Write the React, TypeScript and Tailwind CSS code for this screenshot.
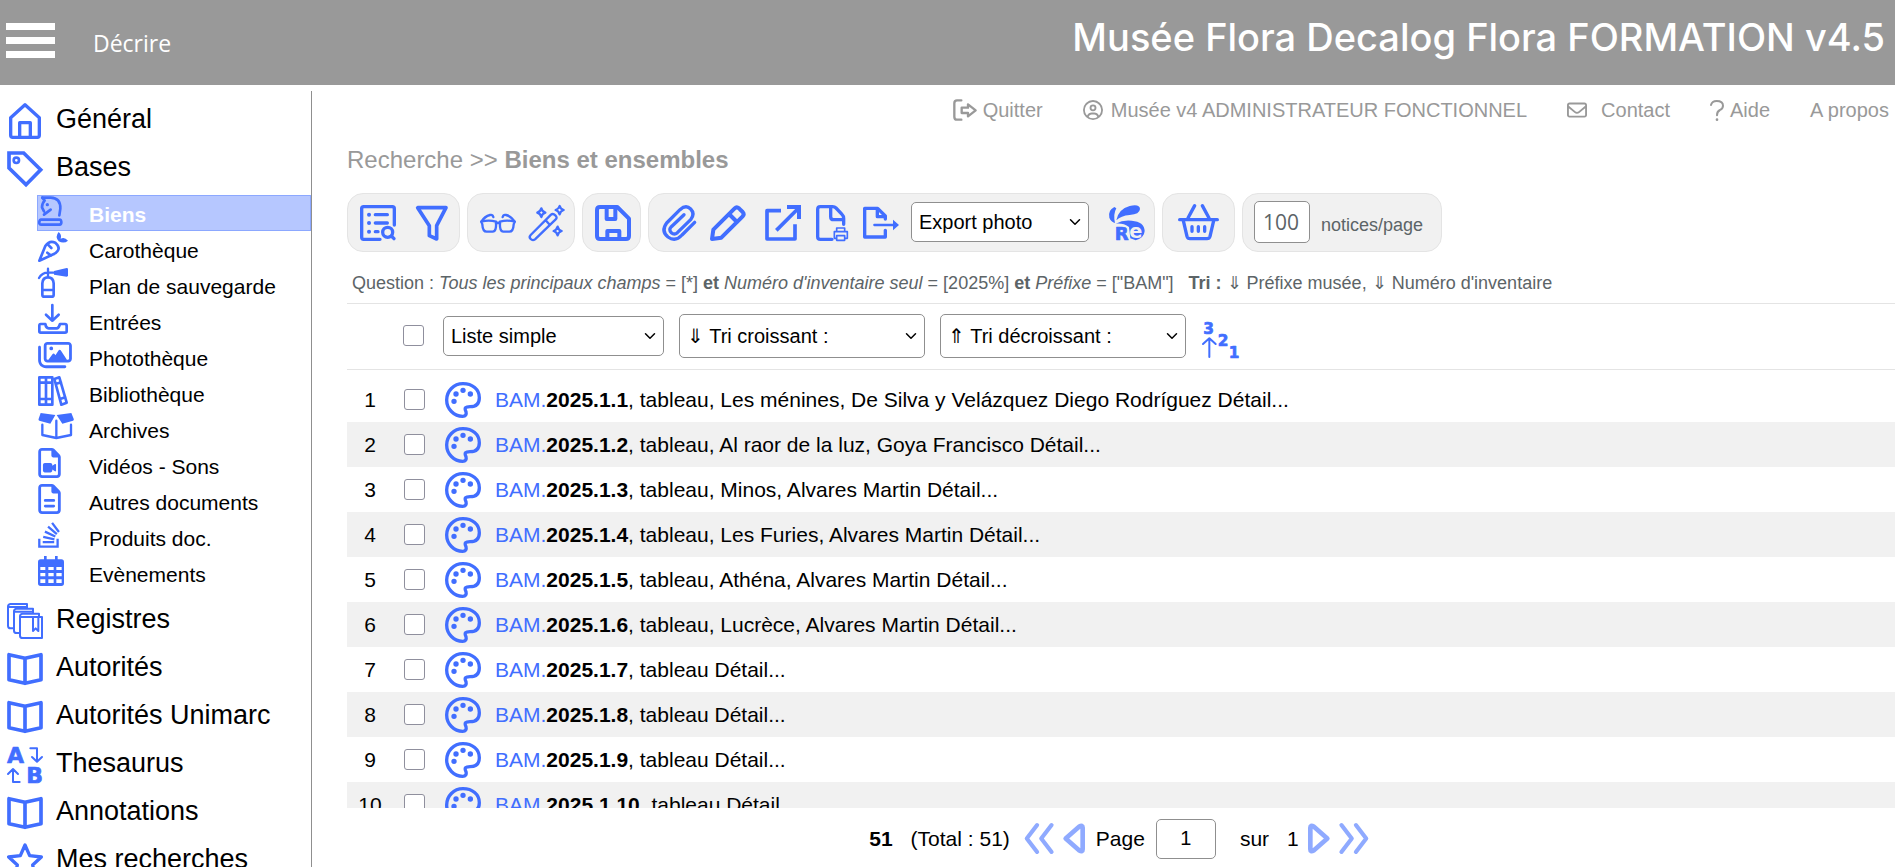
import { useState } from 'react'
import type { ReactNode } from 'react'
import clsx from 'clsx'
import { ChevronDown } from 'lucide-react'
import { FaRegCircleUser, FaRegEnvelope, FaRegFileLines, FaRegFileVideo, FaRegImages, FaStackOverflow } from 'react-icons/fa6'

type DrawProps = { box: string; className: string; width?: number; children: ReactNode }

// Outline icon, three drawing units to a pixel
function Draw({ box, className, width = 10, children }: DrawProps) {
    return (
        <svg
            viewBox={box}
            className={clsx('shrink-0 overflow-visible', className)}
            fill="none"
            stroke="currentColor"
            strokeWidth={width}
            strokeLinecap="round"
            strokeLinejoin="round"
            aria-hidden="true"
        >
            {children}
        </svg>
    )
}

const solid = { fill: 'currentColor', stroke: 'none' }
const glyph = { fill: 'currentColor', strokeWidth: 2, fontFamily: 'DejaVu Sans, sans-serif', fontWeight: 700 }

/* ---------- Menu icons ---------- */

const HomeIcon = () => (
    <Draw box="0 0 108 108" className="size-9">
        <path d="M54 5L97 44V97q0 6-6 6H17q-6 0-6-6V44Z" />
        <path d="M38 103V59H70V103" />
    </Draw>
)

const TagIcon = () => (
    <Draw box="0 0 108 108" className="size-9" width={11}>
        <path d="M6 6H50L101 56L57 101L6 51Z" strokeLinejoin="miter" />
        <circle cx="28" cy="28" r="8" strokeWidth="8" />
    </Draw>
)

const RegisterIcon = () => (
    <Draw box="0 0 108 108" className="size-9" width={6}>
        <path d="M60 12V3H10Q3 4 3 11V68Q3 76 11 76H20M5 12H60V16" />
        <path d="M78 26V17H28Q21 18 21 25V83Q21 90 29 90H37M23 26H78V30" />
        <path d="M96 40V32H46Q39 33 39 40V98Q39 105 47 105H105V42H41" />
        <path d="M78 44V84l8-8 8 8V44" />
    </Draw>
)

const BookIcon = () => (
    <Draw box="0 0 108 108" className="size-9" width={11}>
        <path d="M54 22L6 11V86L54 97L102 86V11L54 22V97" />
    </Draw>
)

const ThesaurusIcon = () => (
    <Draw box="0 0 108 108" className="size-9" width={6}>
        <text x="0" y="49" fontSize="66" {...glyph}>A</text>
        <text x="58" y="108" fontSize="66" {...glyph}>B</text>
        <path d="M70 4H90V43M75 30L90 44L105 30" />
        <path d="M38 105H18V66M3 81L18 66L33 81" />
    </Draw>
)

const StarIcon = () => (
    <Draw box="0 0 108 108" className="size-9">
        <path d="M54 6L68 38L103 42L77 66L84 101L54 83L24 101L31 66L5 42L40 38Z" />
    </Draw>
)

const KnightIcon = () => (
    <Draw box="0 0 90 90" className="size-[30px]" width={8}>
        <path d="M10 71H65Q69 71 70 78T64 86H10Q3 86 4 78T10 71Z" />
        <path d="M13 5H38Q68 6 67 38L64 58" />
        <path d="M13 5L20 14Q12 22 12 34L18 46M18 56L38 41" />
        <circle cx="28" cy="26" r="5" {...solid} />
    </Draw>
)

const CarrotIcon = () => (
    <Draw box="0 0 90 90" className="size-[30px]" width={8}>
        <path d="M4 86L22 42Q34 24 52 32Q68 46 58 58Q54 64 46 67Z" />
        <path d="M30 38L40 48M28 62L38 70" />
        <path d="M62 28Q50 14 62 0Q72 8 68 20Q80 14 90 26Q78 36 62 28Z" {...solid} />
    </Draw>
)

const ExtinguisherIcon = () => (
    <Draw box="0 0 90 90" className="size-[30px]" width={7}>
        <path d="M48 9L86 0Q90 0 90 4V22Q90 26 86 26L48 20Z" {...solid} />
        <path d="M3 30Q12 14 30 14H50M30 2V26" />
        <path d="M13 80V46Q14 28 30 28T47 46V80Q47 86 41 86H19Q13 86 13 80ZM13 66H47" strokeWidth="8" />
    </Draw>
)

const InboxIcon = () => (
    <Draw box="0 0 90 90" className="size-[30px]" width={8}>
        <path d="M43 3V50M24 32L43 50L62 32" />
        <path d="M8 60H22Q24 73 32 73H56Q62 73 66 60H81Q86 60 86 65V82Q86 86 81 86H8Q4 86 4 82V65Q4 60 8 60Z" />
    </Draw>
)

const ShelfIcon = () => (
    <Draw box="0 0 90 90" className="size-[30px]" width={8}>
        <path d="M4 4H24V86H4ZM24 4H43V86H24ZM4 20H43M4 69H43" />
        <path d="M49 9L64 4L86 80L70 86ZM53 24L69 19M66 69L82 64" />
    </Draw>
)

const BoxIcon = () => (
    <Draw box="0 0 108 90" className="h-[30px] w-9" width={7}>
        <path d="M8 3L52 9L37 35L4 26Q0 24 2 20ZM100 3L56 9L73 35L105 26Q109 24 107 20Z" {...solid} />
        <path d="M13 38V69L55 78L99 69V38M55 26V78" />
    </Draw>
)

const CalendarIcon = () => (
    <Draw box="0 0 90 90" className="size-[30px]">
        <path
            fillRule="evenodd"
            d="M18 0H26V10H51V0H59V10H70Q78 10 78 18V82Q78 90 70 90H8Q0 90 0 82V18Q0 10 8 10H18ZM7 33V42H22V33ZM31 33V42H47V33ZM55 33V42H71V33ZM7 51V61H22V51ZM31 51V61H47V51ZM55 51V61H71V51ZM7 70V81H22V70ZM31 70V81H47V70ZM55 70V81H71V70Z"
            {...solid}
        />
    </Draw>
)

/* ---------- Toolbar icons ---------- */

const ListSearchIcon = () => (
    <Draw box="0 0 108 108" className="size-9">
        <path d="M103 60V11Q103 5 97 5H11Q5 5 5 11V97Q5 103 11 103H60" />
        <path d="M46 29H82M46 54H82M46 80H54" />
        <path d="M27 29h.1M27 54h.1M27 80h.1" strokeWidth="12" />
        <circle cx="83" cy="82" r="15" />
        <path d="M94 93L102 101" />
    </Draw>
)

const FunnelIcon = () => (
    <Draw box="0 0 108 108" className="size-9" width={11}>
        <path d="M11 8H96L68 62V102L46 92V62Z" />
    </Draw>
)

const GlassesIcon = () => (
    <Draw box="0 0 108 108" className="size-9" width={7}>
        <path d="M4 50Q26 44 48 50Q50 80 38 80H20Q8 80 7 58ZM104 50Q82 44 60 50Q58 80 70 80H88Q100 80 101 58Z" />
        <path d="M48 56Q54 50 60 56M4 50Q14 34 30 30Q38 28 40 36M104 50Q94 34 78 30Q70 28 68 36" />
    </Draw>
)

const WandIcon = () => (
    <Draw box="0 0 108 108" className="size-9" width={7}>
        <path d="M5 90L66 29Q72 24 79 31T80 43L18 103Q11 108 5 102T5 90ZM50 46L62 59" />
        <path d="M37 10Q39 20 49 23Q39 26 37 36Q34 26 25 23Q34 20 37 10ZM92 3Q94 12 104 15Q94 18 92 28Q89 18 80 15Q89 12 92 3ZM86 65Q88 75 98 78Q88 81 86 91Q83 81 74 78Q83 75 86 65Z" />
    </Draw>
)

const SaveIcon = () => (
    <Draw box="0 0 108 108" className="size-9" width={12}>
        <path d="M15 6H67L102 41V93Q102 102 93 102H15Q6 102 6 93V15Q6 6 15 6Z" />
        <path d="M35 7V42H61V7M37 101V78H73V101" />
    </Draw>
)

const ClipIcon = () => (
    <Draw box="0 0 108 108" className="size-9">
        <path d="M98 52L60 90Q40 112 18 96Q-4 78 14 54L54 14Q72 -2 86 12Q100 26 86 44L46 83Q37 91 28 83T28 65L66 29" />
    </Draw>
)

const PencilIcon = () => (
    <Draw box="0 0 108 108" className="size-9" width={12}>
        <path d="M6 102L10 74L74 10Q80 4 87 10L98 21Q104 28 98 34L34 98ZM57 27L81 51" />
    </Draw>
)

const ExternalIcon = () => (
    <Draw box="0 0 108 108" className="size-9" width={11}>
        <path d="M48 17H6V102H90V58" strokeLinecap="butt" />
        <path d="M34 76L98 12" strokeLinecap="butt" />
        <path d="M66 6H102V42" strokeLinecap="butt" strokeLinejoin="miter" strokeWidth="12" />
    </Draw>
)

const PrintPageIcon = () => (
    <Draw box="-6 0 108 108" className="size-9">
        <path d="M48 103H13Q5 103 5 95V13Q5 5 13 5H50Q56 5 60 9L78 28Q83 33 83 40V58" />
        <path d="M44 6V35Q44 44 53 44H82" />
        <path d="M62 80V69H86V80M62 100H55V80H94V100H86M62 92H86V106H62Z" strokeWidth="5" />
    </Draw>
)

const ExportPageIcon = () => (
    <Draw box="0 0 108 108" className="size-9">
        <path d="M67 42V33L44 10H5V96H67V76M43 12V35H66" />
        <path d="M34 60H96" strokeWidth="7" />
        <path d="M90 44L108 60L90 76Z" {...solid} />
    </Draw>
)

const RabbitIcon = () => (
    <Draw box="0 0 108 108" className="size-9">
        <path d="M16 6Q-4 16 1 38Q5 50 18 54Q12 28 22 10ZM22 46Q28 12 62 3Q92 -4 93 12Q92 28 62 30Q36 32 22 46Z" {...solid} />
        <path d="M20 56Q42 44 68 47Q106 50 107 78Q106 98 80 106L64 100L60 66Q44 54 20 56Z" {...solid} />
        <text x="17" y="104" fontSize="54" {...glyph}>R</text>
        <text x="61" y="98" fontSize="58" {...glyph} fill="#f1f1f1" stroke="none">e</text>
    </Draw>
)

const BasketIcon = () => (
    <Draw box="0 0 123 114" className="h-[38px] w-[41px]">
        <path d="M5 47H118M30 42L50 5M93 42L73 5" />
        <path d="M16 50L27 97Q29 104 36 104H87Q94 104 96 97L107 50M42 68V82M61 68V82M80 68V82" />
    </Draw>
)

const SortIcon = () => (
    <Draw box="0 0 108 108" className="size-9" width={6}>
        <text x="4" y="35" fontSize="46" {...glyph}>3</text>
        <text x="47" y="71" fontSize="46" {...glyph}>2</text>
        <text x="80" y="107" fontSize="46" {...glyph}>1</text>
        <path d="M22 105V50M3 66L22 49L41 66" />
    </Draw>
)

const PaletteIcon = () => (
    <Draw box="0 0 108 108" className="size-9 text-[#416eff]">
        <path d="M54 5C26 5 5 27 5 54s22 49 48 49c9 0 12-6 10-14c-6-12-1-15 12-15c20 0 28-9 28-27C103 22 82 5 54 5Z" />
        <path d="M27 58h.1M33 36h.1M54 25h.1M76 36h.1" strokeWidth="16" />
    </Draw>
)

const LeaveIcon = () => (
    <Draw box="0 0 72 66" className="h-[22px] w-6" width={7}>
        <path d="M25 4H12Q4 4 4 13V53Q4 62 12 62H25" />
        <path d="M26 26H45V16L68 34L45 52V42H26Z" />
    </Draw>
)

const HelpIcon = () => (
    <Draw box="0 0 42 63" className="h-[21px] w-[14px]" width={6}>
        <path d="M3 15Q6 3 20 3Q39 3 39 17Q39 25 30 30Q21 34 21 46" />
        <circle cx="21" cy="59" r="4" {...solid} />
    </Draw>
)

const FirstIcon = ({ className = '' }) => (
    <Draw box="0 0 87 90" className={clsx('h-[31px] w-[30px]', className)} width={12}>
        <path d="M38 6L8 45L38 84M80 6L50 45L80 84" />
    </Draw>
)

const PrevIcon = ({ className = '' }) => (
    <Draw box="0 0 66 90" className={clsx('h-[31px] w-[22px]', className)} width={14}>
        <path d="M8 45L49 9Q59 3 59 13V77Q59 87 49 81Z" />
    </Draw>
)

/* ---------- Data ---------- */

const databases = [
    { label: 'Biens', icon: <KnightIcon /> },
    { label: 'Carothèque', icon: <CarrotIcon /> },
    { label: 'Plan de sauvegarde', icon: <ExtinguisherIcon /> },
    { label: 'Entrées', icon: <InboxIcon /> },
    { label: 'Photothèque', icon: <FaRegImages className="h-[30px] w-[34px]" /> },
    { label: 'Bibliothèque', icon: <ShelfIcon /> },
    { label: 'Archives', icon: <BoxIcon /> },
    { label: 'Vidéos - Sons', icon: <FaRegFileVideo className="h-[30px] w-[23px]" /> },
    { label: 'Autres documents', icon: <FaRegFileLines className="h-[30px] w-[23px]" /> },
    { label: 'Produits doc.', icon: <FaStackOverflow className="h-[30px] w-[22px]" /> },
    { label: 'Evènements', icon: <CalendarIcon /> }
]

const sections = [
    { label: 'Registres', icon: <RegisterIcon /> },
    { label: 'Autorités', icon: <BookIcon /> },
    { label: 'Autorités Unimarc', icon: <BookIcon /> },
    { label: 'Thesaurus', icon: <ThesaurusIcon /> },
    { label: 'Annotations', icon: <BookIcon /> },
    { label: 'Mes recherches', icon: <StarIcon /> }
]

const records = [
    ', tableau, Les ménines, De Silva y Velázquez Diego Rodríguez Détail...',
    ', tableau, Al raor de la luz, Goya Francisco Détail...',
    ', tableau, Minos, Alvares Martin Détail...',
    ', tableau, Les Furies, Alvares Martin Détail...',
    ', tableau, Athéna, Alvares Martin Détail...',
    ', tableau, Lucrèce, Alvares Martin Détail...',
    ', tableau Détail...',
    ', tableau Détail...',
    ', tableau Détail...',
    ', tableau Détail...'
]

/* ---------- Building blocks ---------- */

function Section({ icon, label }: { icon: ReactNode; label: string }) {
    return (
        <a href="#" className="flex h-12 items-center gap-[13px] pl-[7px] text-[27px] whitespace-nowrap">
            <span className="mt-1.5 text-[#416eff]">{icon}</span>
            <span className="pt-0.5">{label}</span>
        </a>
    )
}

function Group({ className, children }: { className: string; children: ReactNode }) {
    return (
        <div className={clsx('flex h-[59px] items-center rounded-2xl border border-[#e4e4e4] bg-[#f1f1f1] text-[#416eff]', className)}>
            {children}
        </div>
    )
}

function Tool({ label, children }: { label: string; children: ReactNode }) {
    return <button type="button" aria-label={label}>{children}</button>
}

function Select({ label, name, className }: { label: string; name: string; className: string }) {
    return (
        <div className={clsx('relative text-black', className)}>
            <select aria-label={name} className="size-full appearance-none rounded-[5px] border border-[#8f8f8f] bg-white px-[7px] text-xl">
                <option>{label}</option>
            </select>
            <ChevronDown className="pointer-events-none absolute top-1/2 right-[5px] size-[18px] -translate-y-1/2" strokeWidth={2} />
        </div>
    )
}

const checkbox = 'block size-[21px] appearance-none rounded-[3px] border border-[#8f8f9d] bg-white checked:bg-[#416eff]'

export default function App() {
    const [perPage, setPerPage] = useState('100')
    const [page, setPage] = useState('1')
    const [menuOpen, setMenuOpen] = useState(true)

    return (
        <div className="flex h-screen flex-col overflow-hidden bg-white font-['Liberation_Sans',Arial,sans-serif] text-black">
            <header className="flex h-[85px] shrink-0 items-center bg-[#999999] pr-[10px] pl-1.5 text-white">
                <button type="button" aria-label="Menu" onClick={() => setMenuOpen(!menuOpen)} className="mb-1 flex w-[49px] flex-col gap-[7px]">
                    <span className="h-[7px] bg-white" />
                    <span className="h-[7px] bg-white" />
                    <span className="h-[7px] bg-white" />
                </button>
                <span className="pt-0.5 pl-[38px] font-['Open_Sans',sans-serif] text-[23px]">Décrire</span>
                <h1 className="ml-auto pb-[10px] font-[Inter,sans-serif] text-[38px] font-medium">Musée Flora Decalog Flora FORMATION v4.5</h1>
            </header>

            <div className="flex min-h-0 flex-1">
                {menuOpen && (
                    <nav className="mt-1.5 w-[312px] shrink-0 overflow-hidden border-r border-[#8f8f8f] pt-[3px]">
                        <Section icon={<HomeIcon />} label="Général" />
                        <Section icon={<TagIcon />} label="Bases" />
                        <ul className="mt-[5px] mb-[3px] pl-[37px]">
                            {databases.map((item, i) => (
                                <li key={item.label}>
                                    <a
                                        href="#"
                                        className={clsx(
                                            'flex h-9 border text-[21px] leading-[38px] whitespace-nowrap',
                                            i === 0 ? 'border-[#8ca8ff] bg-[#b6c7ff] font-bold text-white' : 'border-transparent'
                                        )}
                                    >
                                        <span className="w-[51px] shrink-0 text-[#416eff]">{item.icon}</span>
                                        {item.label}
                                    </a>
                                </li>
                            ))}
                        </ul>
                        {sections.map(item => (
                            <Section key={item.label} icon={item.icon} label={item.label} />
                        ))}
                    </nav>
                )}

                <main className="flex min-w-0 flex-1 flex-col pl-[35px]">
                    <div className="flex h-[50px] shrink-0 items-center justify-end gap-10 pr-1.5 text-xl text-[#999999]">
                        <a href="#" className="flex items-center gap-1.5"><LeaveIcon />Quitter</a>
                        <a href="#" className="flex items-center gap-2"><FaRegCircleUser className="size-5" />Musée v4 ADMINISTRATEUR FONCTIONNEL</a>
                        <a href="#" className="flex items-center gap-[14px]"><FaRegEnvelope className="size-5" />Contact</a>
                        <a href="#" className="flex items-center gap-1.5"><HelpIcon />Aide</a>
                        <a href="#">A propos</a>
                    </div>

                    <div className="flex h-12 shrink-0 items-center pt-0.5 text-2xl text-[#999999]">
                        <p>Recherche &gt;&gt; <b>Biens et ensembles</b></p>
                    </div>

                    <div className="mt-[10px] flex shrink-0 gap-[7px]">
                        <Group className="gap-[18px] pr-[9px] pl-3">
                            <Tool label="Recherche par liste"><ListSearchIcon /></Tool>
                            <Tool label="Filtrer"><FunnelIcon /></Tool>
                        </Group>
                        <Group className="gap-[13px] pr-[9px] pl-3">
                            <Tool label="Visualiser"><GlassesIcon /></Tool>
                            <Tool label="Assistant"><WandIcon /></Tool>
                        </Group>
                        <Group className="pr-[9px] pl-3">
                            <Tool label="Enregistrer"><SaveIcon /></Tool>
                        </Group>
                        <Group className="gap-3 pr-[9px] pl-[13px]">
                            <Tool label="Joindre"><ClipIcon /></Tool>
                            <Tool label="Modifier"><PencilIcon /></Tool>
                            <div className="flex gap-[13px] pl-[7px]">
                                <Tool label="Ouvrir"><ExternalIcon /></Tool>
                                <Tool label="Imprimer"><PrintPageIcon /></Tool>
                                <Tool label="Exporter"><ExportPageIcon /></Tool>
                            </div>
                            <Select name="Export" label="Export photo" className="mr-2 mb-0.5 h-10 w-[178px]" />
                            <Tool label="Renard"><RabbitIcon /></Tool>
                        </Group>
                        <Group className="px-[15px]">
                            <Tool label="Panier"><BasketIcon /></Tool>
                        </Group>
                        <Group className="gap-[11px] pr-[18px] pl-[11px]">
                            <input
                                id="perPage"
                                value={perPage}
                                onChange={e => setPerPage(e.target.value)}
                                className="mb-0.5 h-[42px] w-14 rounded-[5px] border border-[#8f8f8f] bg-white px-2 font-['Open_Sans',sans-serif] text-[21px] text-[#5c6467]"
                            />
                            <label htmlFor="perPage" className="pt-1 text-lg text-[#5c6467]">notices/page</label>
                        </Group>
                    </div>

                    <p className="shrink-0 border-b border-[#e4e4e4] pt-[19px] pb-2 pl-[5px] text-lg leading-6 text-[#5c6467]">
                        Question : <i>Tous les principaux champs</i> = [*] <b>et</b> <i>Numéro d'inventaire seul</i> = [2025%] <b>et</b>{' '}
                        <i>Préfixe</i> = ["BAM"] &nbsp; <b>Tri :</b> ⇓ Préfixe musée, ⇓ Numéro d'inventaire
                    </p>

                    <div className="flex h-[66px] shrink-0 items-center border-b border-[#e4e4e4] pb-0.5 pl-14 text-[#416eff]">
                        <input type="checkbox" aria-label="Tout sélectionner" className={checkbox} />
                        <Select name="Affichage" label="Liste simple" className="ml-[19px] h-10 w-[221px]" />
                        <Select name="Tri croissant" label="⇓ Tri croissant :" className="ml-[15px] h-11 w-[246px]" />
                        <Select name="Tri décroissant" label="⇑ Tri décroissant :" className="ml-[15px] h-11 w-[246px]" />
                        <button type="button" aria-label="Trier" className="mt-2 ml-4"><SortIcon /></button>
                    </div>

                    <div className="mt-[7px] min-h-0 flex-1 overflow-hidden">
                        <table className="w-full table-fixed text-[21px]">
                            <tbody>
                                {records.map((text, i) => (
                                    <tr key={i} className="h-[45px] even:bg-[#f1f1f1]">
                                        <td className="w-[46px] p-0 text-center">{i + 1}</td>
                                        <td className="w-[52px] p-0 pl-[11px]">
                                            <input type="checkbox" aria-label={`Notice ${i + 1}`} className={checkbox} />
                                        </td>
                                        <td className="w-[50px] p-0"><PaletteIcon /></td>
                                        <td className="p-0 whitespace-nowrap">
                                            <a href="#" className="text-[#416eff]">BAM.</a><b>2025.1.{i + 1}</b>{text}
                                        </td>
                                    </tr>
                                ))}
                            </tbody>
                        </table>
                    </div>

                    <footer className="flex h-[59px] shrink-0 items-center justify-center pt-0.5 pr-1 text-[21px]">
                        <b>51</b>
                        <span className="ml-[18px]">(Total : 51)</span>
                        <button type="button" aria-label="Première page" className="ml-[14px] text-[#8faaff]"><FirstIcon /></button>
                        <button type="button" aria-label="Page précédente" className="ml-[9px] text-[#8faaff]"><PrevIcon /></button>
                        <label htmlFor="page" className="ml-[11px]">Page</label>
                        <input
                            id="page"
                            value={page}
                            onChange={e => setPage(e.target.value)}
                            className="ml-[11px] h-10 w-[60px] rounded-[5px] border border-[#8f8f8f] text-center text-xl"
                        />
                        <span className="ml-6">sur</span>
                        <span className="ml-[18px]">1</span>
                        <button type="button" aria-label="Page suivante" className="ml-[9px] text-[#8faaff]"><PrevIcon className="-scale-x-100" /></button>
                        <button type="button" aria-label="Dernière page" className="ml-[9px] text-[#8faaff]"><FirstIcon className="-scale-x-100" /></button>
                    </footer>
                </main>
            </div>
        </div>
    )
}
